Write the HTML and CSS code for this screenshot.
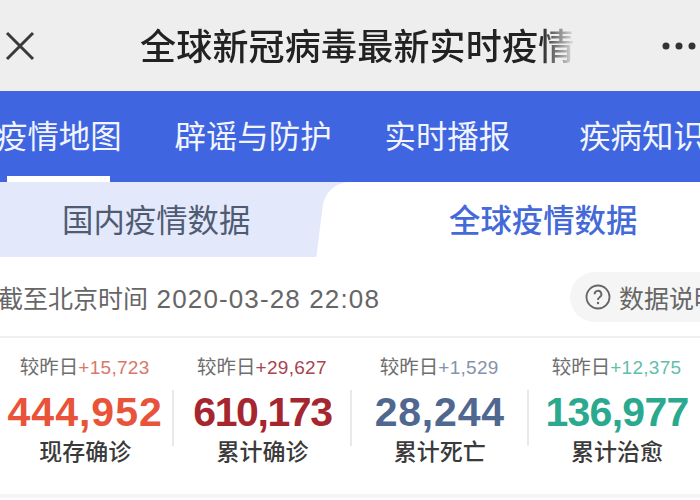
FILE: index.html
```html
<!DOCTYPE html>
<html lang="zh-CN">
<head>
  <meta charset="UTF-8">
  <title>全球新冠病毒最新实时疫情</title>
  <link rel="stylesheet" href="styles.css">
</head>
<body>
  <div class="page">
    <header class="titlebar">
      <svg class="close" width="30" height="30" viewBox="0 0 30 30">
        <path d="M2 2 L28 28 M28 2 L2 28" stroke="#3a3a3a" stroke-width="3" fill="none"/>
      </svg>
      <div class="title">全球新冠病毒最新实时疫情</div>
      <svg class="more" width="38" height="8" viewBox="0 0 38 8">
        <circle cx="4" cy="4" r="3.5" fill="#333"/>
        <circle cx="17" cy="4" r="3.5" fill="#333"/>
        <circle cx="30" cy="4" r="3.5" fill="#333"/>
      </svg>
    </header>

    <nav class="nav">
      <a class="nav-item active">疫情地图</a>
      <a class="nav-item">辟谣与防护</a>
      <a class="nav-item">实时播报</a>
      <a class="nav-item last">疾病知识</a>
    </nav>

    <div class="tabs">
      <div class="tab">国内疫情数据</div>
      <div class="tab current"><span class="tab-text">全球疫情数据</span></div>
    </div>

    <div class="date-row">
      <span class="date">截至北京时间 <span class="num">2020-03-28 22:08</span></span>
      <div class="help">
        <svg width="26" height="26" viewBox="0 0 26 26">
          <circle cx="13" cy="13" r="11.5" stroke="#666" stroke-width="1.8" fill="none"/>
          <path d="M9.6 10.2 A3.4 3.4 0 1 1 14.6 13.2 C13.5 13.9 13 14.5 13 16" stroke="#666" stroke-width="1.9" fill="none"/>
          <circle cx="13" cy="19" r="1.2" fill="#666"/>
        </svg>
        <span>数据说明</span>
      </div>
    </div>

    <section class="stats">
      <div class="stat">
        <div class="delta">较昨日<span class="plus red-light">+15,723</span></div>
        <div class="value red">444,952</div>
        <div class="name">现存确诊</div>
      </div>
      <div class="stat">
        <div class="delta">较昨日<span class="plus dark-light">+29,627</span></div>
        <div class="value dark">610,173</div>
        <div class="name">累计确诊</div>
      </div>
      <div class="stat">
        <div class="delta">较昨日<span class="plus grey-light">+1,529</span></div>
        <div class="value grey">28,244</div>
        <div class="name">累计死亡</div>
      </div>
      <div class="stat">
        <div class="delta">较昨日<span class="plus green-light">+12,375</span></div>
        <div class="value green">136,977</div>
        <div class="name">累计治愈</div>
      </div>
    </section>
  </div>
</body>
</html>
```

FILE: styles.css
```css
html, body {
  margin: 0;
  padding: 0;
  height: 100%;
  overflow: hidden;
  background-color: white;
}

body {
  font-family: "Noto Sans CJK SC", "Liberation Sans", sans-serif;
}

.page {
  width: 700px;
  height: 500px;
  overflow: hidden;
}

.titlebar {
  height: 91px;
  background-color: #eeeeee;
  display: flex;
  align-items: center;
  padding-left: 5px;
  box-sizing: border-box;
}

.close {
  flex: none;
}

.title {
  width: 438px;
  margin-left: 105px;
  margin-bottom: 3px;
  font-size: 36px;
  font-weight: 500;
  letter-spacing: 0.2px;
  color: #222;
  white-space: nowrap;
  overflow: hidden;
  -webkit-mask-image: linear-gradient(to right, black 92%, transparent 100%);
  mask-image: linear-gradient(to right, black 92%, transparent 100%);
}

.more {
  flex: none;
  margin-left: 86px;
}

.nav {
  height: 91px;
  background-color: #3f66e0;
  display: flex;
  gap: 53px;
  margin-left: -4px;
  width: 900px;
}

.nav-item {
  position: relative;
  display: block;
  font-size: 31.4px;
  line-height: 87px;
  color: #f2f5ff;
  white-space: nowrap;
}

.nav-item.last {
  margin-left: 16px;
}

.nav-item.active::after {
  content: "";
  position: absolute;
  left: 11px;
  bottom: 0;
  width: 103px;
  height: 6px;
  background-color: white;
}

.tabs {
  height: 75px;
  display: flex;
  background-color: #e3e9fb;
}

.tab {
  font-size: 31.4px;
  line-height: 74px;
  color: #4f5b73;
  white-space: nowrap;
}

.tab:first-child {
  width: 320px;
  padding-left: 62px;
  box-sizing: border-box;
}

.tab.current {
  position: relative;
  flex: 1;
  padding-left: 129px;
  font-weight: 500;
  color: #4469d8;
}

.tab.current::before {
  content: "";
  position: absolute;
  top: 0;
  bottom: 0;
  left: 1px;
  right: -40px;
  background-color: white;
  border-top-left-radius: 24px;
  transform: skewX(-7deg);
}

.tab-text {
  position: relative;
}

.date-row {
  height: 79px;
  display: flex;
  align-items: center;
  justify-content: space-between;
  margin-left: -2px;
  width: 762px;
  font-size: 25px;
  color: #666;
}

.date {
  white-space: nowrap;
}

.num {
  margin-left: 3px;
  font-family: "Liberation Sans", sans-serif;
  font-size: 26px;
  letter-spacing: 1.13px;
}

.help {
  display: flex;
  align-items: center;
  gap: 8px;
  width: 190px;
  height: 50px;
  padding-left: 15px;
  box-sizing: border-box;
  border-radius: 25px;
  background-color: #f5f5f5;
  white-space: nowrap;
}

.help svg {
  flex: none;
}

.stats {
  height: 156px;
  display: flex;
  margin-left: -3px;
  width: 712px;
  border-top: 2px solid #efefef;
  border-bottom: 4px solid #f4f4f4;
}

.stat {
  position: relative;
  width: 177.3px;
  text-align: center;
  white-space: nowrap;
}

.stat:not(:last-child)::after {
  content: "";
  position: absolute;
  right: 0;
  top: 52px;
  height: 56px;
  width: 2px;
  background-color: #e9e9e9;
}

.delta {
  margin-top: 13px;
  padding-right: 2px;
  font-size: 19.5px;
  line-height: 30px;
  color: #6e6e6e;
}

.plus {
  font-family: "Liberation Sans", sans-serif;
  font-size: 19px;
  letter-spacing: 0.3px;
}

.value {
  margin-top: 5px;
  padding-right: 1px;
  font-family: "Liberation Sans", sans-serif;
  font-size: 41px;
  font-weight: bold;
  line-height: 48px;
}

.name {
  font-size: 23px;
  font-weight: 500;
  line-height: 32px;
  margin-top: -2px;
  padding-right: 1px;
  color: #3a3a3a;
}

/* digits in the reference are proportional, so each number gets its own tracking */
.red { color: #e8533a; letter-spacing: 1px; }
.dark { color: #a62630; letter-spacing: -1.4px; }
.grey { color: #50688f; letter-spacing: 0.8px; }
.green { color: #2ba98f; letter-spacing: -0.7px; }
.red-light { color: #d9776a; }
.dark-light { color: #a94450; }
.grey-light { color: #8493ab; }
.green-light { color: #5fbfa9; }
```
